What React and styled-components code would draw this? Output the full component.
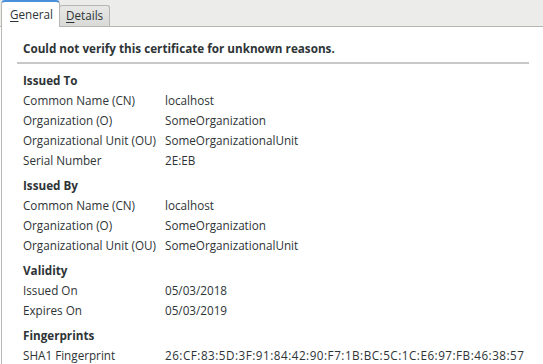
import React from 'react';
import styled, { createGlobalStyle } from 'styled-components';

const Global = createGlobalStyle`
  html, body {
    margin: 0;
    padding: 0;
    background: #ffffff;
    overflow: hidden;
  }
  body {
    font-family: "Open Sans", "DejaVu Sans", sans-serif;
    font-size: 11.7px;
    color: #2e3436;
  }
`;

const sections = [
  {
    title: 'Issued To',
    rows: [
      ['Common Name (CN)', 'localhost'],
      ['Organization (O)', 'SomeOrganization'],
      ['Organizational Unit (OU)', 'SomeOrganizationalUnit'],
      ['Serial Number', '2E:EB'],
    ],
  },
  {
    title: 'Issued By',
    rows: [
      ['Common Name (CN)', 'localhost'],
      ['Organization (O)', 'SomeOrganization'],
      ['Organizational Unit (OU)', 'SomeOrganizationalUnit'],
    ],
  },
  {
    title: 'Validity',
    rows: [
      ['Issued On', '05/03/2018'],
      ['Expires On', '05/03/2019'],
    ],
  },
  {
    title: 'Fingerprints',
    rows: [
      ['SHA1 Fingerprint', '26:CF:83:5D:3F:91:84:42:90:F7:1B:BC:5C:1C:E6:97:FB:46:38:57', true],
    ],
  },
];

export default function App() {
  return (
    <Window>
      <Global />
      <TabBar>
        <Tab active>
          <u>G</u>eneral
        </Tab>
        <Tab>
          <u>D</u>etails
        </Tab>
      </TabBar>
      <Panel>
        <Message>Could not verify this certificate for unknown reasons.</Message>
        <Separator />
        {sections.map((s) => (
          <Section key={s.title}>
            <SectionTitle>{s.title}</SectionTitle>
            {s.rows.map(([label, value, hex]) => (
              <Row key={label}>
                <span>{label}</span>
                <Value hex={hex}>{value}</Value>
              </Row>
            ))}
          </Section>
        ))}
      </Panel>
    </Window>
  );
}

//styled

const Window = styled.div`
  width: 543px;
  height: 364px;
  display: flex;
  flex-direction: column;
  background: #ffffff;
`;

const TabBar = styled.div`
  height: 26px;
  display: flex;
  align-items: flex-end;
  padding-left: 1px;
  background: #ececeb;
  border-bottom: 1px solid #b6b6b3;
`;

const Tab = styled.div`
  box-sizing: border-box;
  display: flex;
  align-items: center;
  line-height: 1;
  ${(p) =>
    p.active
      ? `
    height: 27px;
    margin-bottom: -1px;
    width: 59px;
    padding-left: 8px;
    background: #ffffff;
    border: 1px solid #b6b6b3;
    border-top: 2px solid #4a90d9;
    border-bottom: none;
    border-radius: 4px 4px 0 0;
  `
      : `
    height: 21px;
    width: 51px;
    padding-left: 6px;
    margin-left: -1px;
    background: linear-gradient(#e8e8e7, #d9d9d8);
    border: 1px solid #b6b6b3;
    border-bottom: none;
    border-radius: 3px 3px 0 0;
  `}
  u {
    text-decoration: underline;
    text-underline-offset: 2px;
  }
`;

const Panel = styled.div`
  flex: 1;
  margin-left: 1px;
  border-left: 1px solid #b6b6b3;
  padding: 11px 15px 0 15px;
`;

const Message = styled.div`
  font-weight: bold;
  line-height: 20px;
  padding-left: 6px;
`;

const Separator = styled.div`
  height: 2px;
  margin: 4px 0 6px 0;
  background: #c8c8c6;
  width: 512px;
`;

const Section = styled.div`
  padding-left: 6px;
  margin-bottom: 5px;
`;

const SectionTitle = styled.div`
  font-weight: bold;
  line-height: 20px;
`;

const Row = styled.div`
  display: grid;
  grid-template-columns: 142px auto;
  line-height: 20px;
  white-space: nowrap;
`;

const Value = styled.span`
  letter-spacing: ${(p) => (p.hex ? '0.5px' : '0')};
`;
